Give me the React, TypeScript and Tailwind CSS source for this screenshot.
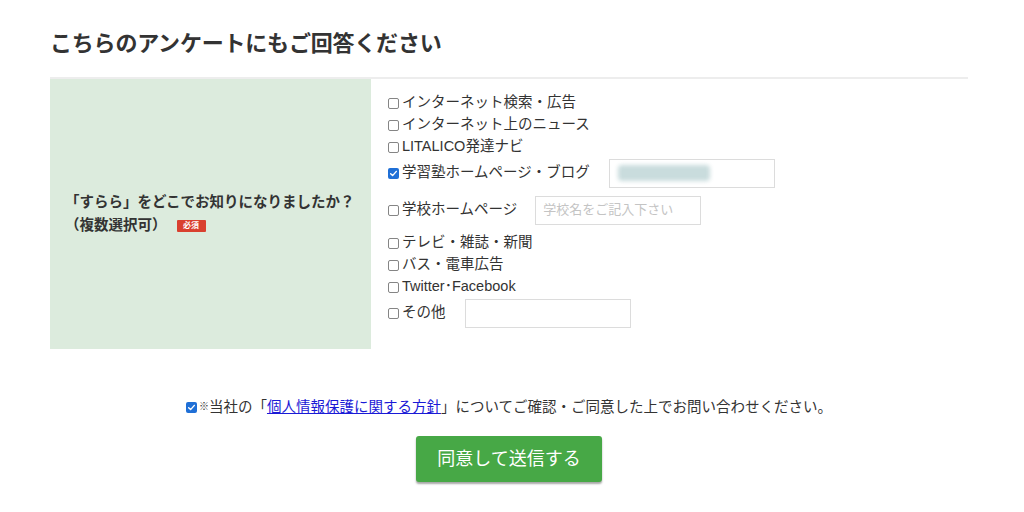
import React from "react";

const font = { fontFamily: '"Liberation Sans", "Noto Sans CJK JP", sans-serif' };

const Box: React.FC<{ checked?: boolean }> = ({ checked }) =>
  checked ? (
    <span className="inline-flex h-[11px] w-[11px] shrink-0 items-center justify-center rounded-[2px] bg-[#1f6fd6]">
      <svg viewBox="0 0 12 12" className="h-[9px] w-[9px]">
        <path d="M2.2 6.3 4.8 8.8 9.8 3.2" fill="none" stroke="#fff" strokeWidth="1.9" strokeLinecap="round" strokeLinejoin="round" />
      </svg>
    </span>
  ) : (
    <span className="inline-block h-[11px] w-[11px] shrink-0 rounded-[2px] border border-[#858585] bg-white" />
  );

interface Option {
  label: string;
  checked?: boolean;
  input?: "blur" | "school" | "empty";
  spacing?: string;
}

const options: Option[] = [
  { label: "インターネット検索・広告" },
  { label: "インターネット上のニュース" },
  { label: "LITALICO発達ナビ" },
  { label: "学習塾ホームページ・ブログ", checked: true, input: "blur" },
  { label: "学校ホームページ", input: "school", spacing: "mt-[7px]" },
  { label: "テレビ・雑誌・新聞", spacing: "mt-[7px]" },
  { label: "バス・電車広告" },
  { label: "Twitter･Facebook" },
  { label: "その他", input: "empty" },
];

export default function App() {
  return (
    <div className="min-h-[512px] w-[1024px] bg-white pl-[50px] pt-[29px] text-[#333]" style={font}>
      <h2 className="text-[22px] font-bold leading-[30px] tracking-[-0.2px]">こちらのアンケートにもご回答ください</h2>

      <div className="mt-[18px] flex w-[918px] border-t-2 border-[#ededed]">
        <div className="flex w-[321px] items-center bg-[#dcebdd] pl-[15px] pr-2">
          <div className="text-[14.5px] font-bold leading-[23px]">
            <div>「すらら」をどこでお知りになりましたか？</div>
            <div className="flex items-center">
              <span>（複数選択可）</span>
              <span className="ml-[10px] inline-flex h-[12px] w-[29px] items-center justify-center rounded-[1px] bg-[#d9402f] text-[8px] font-bold leading-none text-white">
                必須
              </span>
            </div>
          </div>
        </div>

        <div className="flex-1 pb-[21px] pl-[17px] pt-[13px] text-[14.5px]">
          {options.map((o) => (
            <div
              key={o.label}
              className={`flex items-center ${o.input ? "h-[30px]" : "h-[22px]"} ${o.spacing ?? ""}`}
            >
              <Box checked={o.checked} />
              <span className="ml-[3px] whitespace-nowrap">{o.label}</span>
              {o.input === "blur" && (
                <div className="relative ml-[19px] h-[29px] w-[166px] overflow-hidden border border-[#dcdcdc] bg-white">
                  <div className="absolute left-[8px] top-[5px] h-[16px] w-[92px] rounded-sm bg-[#c9dcdd] blur-[2px]" />
                </div>
              )}
              {o.input === "school" && (
                <div className="ml-[18px] flex h-[29px] w-[166px] items-center border border-[#dcdcdc] bg-white pl-[7px] text-[13px] text-[#c4c4c4]">
                  学校名をご記入下さい
                </div>
              )}
              {o.input === "empty" && (
                <div className="ml-[19px] h-[29px] w-[166px] border border-[#dcdcdc] bg-white" />
              )}
            </div>
          ))}
        </div>
      </div>

      <div className="w-[918px]">
        <div className="mt-[48px] flex items-center justify-center text-[14.5px] leading-[20px]">
          <Box checked />
          <span className="ml-[2px] text-[10px]">※</span>
          <span>当社の「</span>
          <a className="text-[#1a1ad6] underline">個人情報保護に関する方針</a>
          <span>」についてご確認・ご同意した上でお問い合わせください。</span>
        </div>
        <div className="mt-[19px] flex justify-center">
          <button className="h-[46px] w-[186px] rounded-[3px] bg-[#47a846] text-[18px] text-white shadow-[0_2px_2px_rgba(0,0,0,0.35)]">
            同意して送信する
          </button>
        </div>
      </div>
    </div>
  );
}
